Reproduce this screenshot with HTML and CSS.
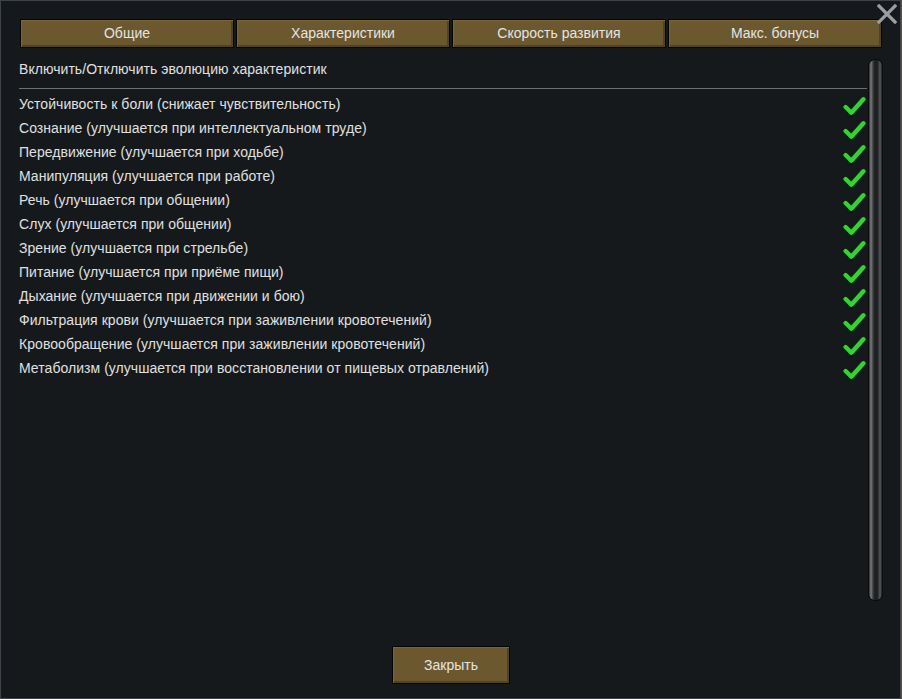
FILE: index.html
```html
<!DOCTYPE html>
<html>
<head>
<meta charset="utf-8">
<link rel="stylesheet" href="styles.css">
</head>
<body>
<div class="window">
  <button class="close" aria-label="close">
    <svg width="22" height="22" viewBox="0 0 22 22"><path d="M3 3 L19 19 M19 3 L3 19" stroke="#9a9da1" stroke-width="3.2" stroke-linecap="square"/></svg>
  </button>
  <div class="tabs">
    <div class="tab">Общие</div>
    <div class="tab">Характеристики</div>
    <div class="tab">Скорость развития</div>
    <div class="tab">Макс. бонусы</div>
  </div>
  <div class="body">
    <div class="list">
      <div class="header">Включить/Отключить эволюцию характеристик</div>
      <div class="rule"></div>
      <div class="row"><span>Устойчивость к боли (снижает чувствительность)</span><svg class="check" viewBox="0 0 24 21"><polyline points="3.5,11.5 9,17 20.5,4" /></svg></div>
      <div class="row"><span>Сознание (улучшается при интеллектуальном труде)</span><svg class="check" viewBox="0 0 24 21"><polyline points="3.5,11.5 9,17 20.5,4" /></svg></div>
      <div class="row"><span>Передвижение (улучшается при ходьбе)</span><svg class="check" viewBox="0 0 24 21"><polyline points="3.5,11.5 9,17 20.5,4" /></svg></div>
      <div class="row"><span>Манипуляция (улучшается при работе)</span><svg class="check" viewBox="0 0 24 21"><polyline points="3.5,11.5 9,17 20.5,4" /></svg></div>
      <div class="row"><span>Речь (улучшается при общении)</span><svg class="check" viewBox="0 0 24 21"><polyline points="3.5,11.5 9,17 20.5,4" /></svg></div>
      <div class="row"><span>Слух (улучшается при общении)</span><svg class="check" viewBox="0 0 24 21"><polyline points="3.5,11.5 9,17 20.5,4" /></svg></div>
      <div class="row"><span>Зрение (улучшается при стрельбе)</span><svg class="check" viewBox="0 0 24 21"><polyline points="3.5,11.5 9,17 20.5,4" /></svg></div>
      <div class="row"><span>Питание (улучшается при приёме пищи)</span><svg class="check" viewBox="0 0 24 21"><polyline points="3.5,11.5 9,17 20.5,4" /></svg></div>
      <div class="row"><span>Дыхание (улучшается при движении и бою)</span><svg class="check" viewBox="0 0 24 21"><polyline points="3.5,11.5 9,17 20.5,4" /></svg></div>
      <div class="row"><span>Фильтрация крови (улучшается при заживлении кровотечений)</span><svg class="check" viewBox="0 0 24 21"><polyline points="3.5,11.5 9,17 20.5,4" /></svg></div>
      <div class="row"><span>Кровообращение (улучшается при заживлении кровотечений)</span><svg class="check" viewBox="0 0 24 21"><polyline points="3.5,11.5 9,17 20.5,4" /></svg></div>
      <div class="row"><span>Метаболизм (улучшается при восстановлении от пищевых отравлений)</span><svg class="check" viewBox="0 0 24 21"><polyline points="3.5,11.5 9,17 20.5,4" /></svg></div>
    </div>
    <div class="scrollbar"><div class="thumb"></div></div>
  </div>
  <div class="footer">
    <div class="btn">Закрыть</div>
  </div>
</div>
</body>
</html>
```
FILE: styles.css
```css
* { box-sizing: border-box; }
html, body { margin: 0; padding: 0; background: #5a5440; }
body { width: 902px; height: 699px; overflow: hidden; font-family: "Liberation Sans", Arial, sans-serif; }
.window {
  position: relative;
  width: 901px;
  height: 699px;
  background: #15191c;
  border: 1px solid #3e434a;
  padding: 18px 0 0 18px;
  display: flex;
  flex-direction: column;
}
.close {
  position: absolute;
  top: 2px;
  right: 2px;
  width: 22px;
  height: 22px;
  padding: 0;
  border: 0;
  background: none;
}
.close svg { display: block; }
.tabs {
  display: flex;
  gap: 2px;
  margin-left: 1px;
  width: 862px;
  height: 29px;
}
.tab {
  flex: 0 0 214px;
  height: 29px;
  background: #6b582f;
  border: 1px solid #050505;
  box-shadow: inset 1px 1px 0 #7a6639, inset -2px -2px 0 #51431f;
  color: #e4e4e4;
  font-size: 14px;
  display: flex;
  align-items: center;
  justify-content: center;
  padding-bottom: 2px;
}
.body {
  display: flex;
  margin-top: 12px;
  height: 540px;
}
.list {
  width: 848px;
  color: #e0e0e0;
  font-size: 14px;
  letter-spacing: 0.05px;
}
.header {
  height: 18px;
  line-height: 18px;
}
.rule {
  margin-top: 10px;
  height: 1px;
  background: #6c6f73;
  margin-bottom: 3px;
}
.row {
  height: 24px;
  display: flex;
  align-items: center;
  justify-content: space-between;
}
.check {
  width: 25px;
  height: 22px;
  margin-top: 3px;
  margin-right: 0;
}
.check polyline {
  fill: none;
  stroke: #34d234;
  stroke-width: 4.2;
  stroke-linecap: round;
  stroke-linejoin: round;
  filter: drop-shadow(0 0 0.8px #0b2a0b) drop-shadow(0.6px 0.6px 0.5px #0a250a);
}
.scrollbar {
  margin-left: 2px;
  width: 13px;
  height: 540px;
}
.thumb {
  width: 13px;
  height: 540px;
  border-radius: 6px;
  background: linear-gradient(to right, #2a2c2e 0, #7a7c7e 2px, #3a3c3e 4px, #1b1d1f 6px, #232527 9px, #5a5c5e 11px, #1b1d1f 13px);
  box-shadow: 0 0 0 1px #0b0c0d;
}
.footer {
  display: flex;
  justify-content: center;
  padding-right: 17px;
  margin-top: 46px;
}
.btn {
  width: 118px;
  height: 38px;
  background: #6b582f;
  border: 1px solid #050505;
  box-shadow: inset 1px 1px 0 #7a6639, inset -2px -2px 0 #51431f;
  color: #e4e4e4;
  font-size: 14px;
  display: flex;
  align-items: center;
  justify-content: center;
  padding-bottom: 1px;
}
```
